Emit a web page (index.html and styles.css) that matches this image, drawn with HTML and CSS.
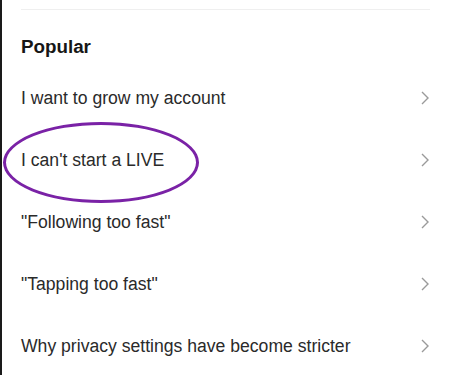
FILE: index.html
```
<!DOCTYPE html>
<html>
<head>
<meta charset="utf-8">
<link rel="stylesheet" href="styles.css">
</head>
<body>
<div class="page">
  <div class="divider"></div>
  <h2 class="title">Popular</h2>
  <ul class="list">
    <li class="row"><span class="label">I want to grow my account</span><svg class="chev" viewBox="0 0 8 14"><path d="M1 1l6 6-6 6"/></svg></li>
    <li class="row circled"><span class="label">I can't start a LIVE</span><svg class="chev" viewBox="0 0 8 14"><path d="M1 1l6 6-6 6"/></svg></li>
    <li class="row"><span class="label">"Following too fast"</span><svg class="chev" viewBox="0 0 8 14"><path d="M1 1l6 6-6 6"/></svg></li>
    <li class="row"><span class="label">"Tapping too fast"</span><svg class="chev" viewBox="0 0 8 14"><path d="M1 1l6 6-6 6"/></svg></li>
    <li class="row"><span class="label">Why privacy settings have become stricter</span><svg class="chev" viewBox="0 0 8 14"><path d="M1 1l6 6-6 6"/></svg></li>
  </ul>
  <div class="ring"></div>
</div>
</body>
</html>
```
FILE: styles.css
```
html, body {
  margin: 0;
  padding: 0;
  background: #fff;
}
body {
  width: 450px;
  height: 375px;
  overflow: hidden;
  font-family: "Liberation Sans", Arial, sans-serif;
  color: #222;
}
.page {
  position: relative;
  height: 375px;
  border-left: 2px solid #1a1a1a;
  box-sizing: border-box;
  padding: 9px 20px 0 19px;
}
.divider {
  height: 1px;
  background: #efefef;
}
.title {
  margin: 27px 0 0 0;
  font-size: 18.8px;
  font-weight: bold;
  line-height: 20px;
  color: #161616;
}
.list {
  list-style: none;
  margin: 10px 0 0 0;
  padding: 0;
}
.row {
  display: flex;
  align-items: center;
  justify-content: space-between;
  height: 62px;
}
.label {
  font-size: 17.6px;
  color: #2a2a2a;
}
.chev {
  width: 8px;
  height: 14px;
  margin-right: 1px;
  fill: none;
  stroke: #9a9a9a;
  stroke-width: 1.4;
}
.ring {
  position: absolute;
  left: 1px;
  top: 122px;
  width: 190px;
  height: 75px;
  border: 3.5px solid #7a22a6;
  border-radius: 50%;
}
```
